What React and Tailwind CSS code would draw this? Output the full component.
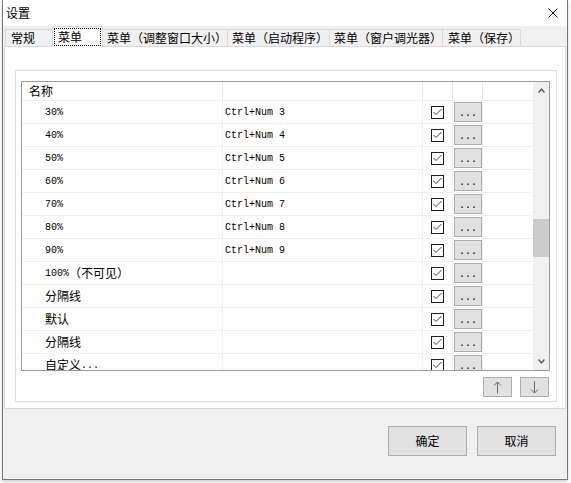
import React from 'react';

const rows = [
  { name: '30%', key: 'Ctrl+Num 3' },
  { name: '40%', key: 'Ctrl+Num 4' },
  { name: '50%', key: 'Ctrl+Num 5' },
  { name: '60%', key: 'Ctrl+Num 6' },
  { name: '70%', key: 'Ctrl+Num 7' },
  { name: '80%', key: 'Ctrl+Num 8' },
  { name: '90%', key: 'Ctrl+Num 9' },
  { name: '100%（不可见）', key: '' },
  { name: '分隔线', key: '' },
  { name: '默认', key: '' },
  { name: '分隔线', key: '' },
  { name: '自定义...', key: '' },
];

const tabs = [
  { label: '常规', w: 'w-[48px]', pl: 'pl-[5px]' },
  { label: '菜单', w: 'w-[51px]', active: true },
  { label: '菜单（调整窗口大小）', w: 'w-[126px]', pl: 'pl-[4px]' },
  { label: '菜单（启动程序）', w: 'w-[103px]', pl: 'pl-[4px]' },
  { label: '菜单（窗户调光器）', w: 'w-[114px]', pl: 'pl-[4px]' },
  { label: '菜单（保存）', w: 'w-[79px]', pl: 'pl-[5px]' },
];

// SimSun-like rendering: half-width ascii in mono, the rest in CJK
const Mixed = ({ text }) => {
  const parts = text.match(/[\x00-\x7f]+|[^\x00-\x7f]+/g) || [];
  return parts.map((p, i) =>
    /^[\x00-\x7f]/.test(p) ? (
      <span key={i} className="relative top-[1px] font-['Liberation_Mono',monospace] text-[10px] leading-[12px] whitespace-pre">
        {p}
      </span>
    ) : (
      <span key={i} className="text-[12px] leading-[14px]">
        {p}
      </span>
    )
  );
};

const CheckBox = () => (
  <div className="w-[13px] h-[13px] border border-[#1e1e1e] bg-white flex items-center justify-center">
    <svg width="11" height="11" viewBox="0 0 11 11">
      <polyline points="1.5,5 4,7.5 9.5,2" fill="none" stroke="#3c3c3c" strokeWidth="1" />
    </svg>
  </div>
);

const Row = ({ name, keyName }) => (
  <div className="flex h-[23px] shrink-0 border-b border-[#f0f0f0]">
    <div className="w-[201px] border-r border-[#f0f0f0] pl-[23px] flex items-center">
      <Mixed text={name} />
    </div>
    <div className="w-[200px] border-r border-[#f0f0f0] pl-[2px] flex items-center">
      <Mixed text={keyName} />
    </div>
    <div className="w-[30px] border-r border-[#f0f0f0] flex items-center justify-center">
      <CheckBox />
    </div>
    <div className="w-[30px] border-r border-[#f0f0f0] pl-px pt-px">
      <div className="w-[28px] h-[20px] border border-[#adadad] bg-[#e1e1e1] flex items-center justify-center">
        <span className="relative top-[2px] font-['Liberation_Mono',monospace] text-[10px] leading-[12px]">...</span>
      </div>
    </div>
    <div className="flex-1" />
  </div>
);

const SmallButton = ({ children }) => (
  <div className="w-[29px] h-[20px] border border-[#adadad] bg-[#e1e1e1] flex items-center justify-center">
    {children}
  </div>
);

export default function App() {
  return (
    <div className="w-[571px] h-[483px] bg-white font-['Noto_Sans_CJK_SC',sans-serif] text-black">
      <div className="ml-[2px] w-[566px] h-[480px] flex flex-col border-l border-r border-b border-[#767676] shadow-[0_2px_3px_rgba(0,0,0,0.18)]">
        {/* title bar */}
        <div className="h-[26px] bg-white flex items-center justify-between pl-[3px] pr-[9px]">
          <span className="text-[12px] leading-[14px]">设置</span>
          <svg width="10" height="10" viewBox="0 0 10 10">
            <path d="M0.5 0.5 L9.5 9.5 M9.5 0.5 L0.5 9.5" stroke="#1a1a1a" strokeWidth="1" />
          </svg>
        </div>

        <div className="flex-1 bg-[#f0f0f0] flex flex-col">
          {/* tabs */}
          <div className="h-[20px] flex items-end pl-[2px]">
            {tabs.map((t, i) =>
              t.active ? (
                <div
                  key={i}
                  className={`${t.w} h-[21px] -ml-px -mb-px relative z-10 bg-white border-t border-l border-r border-[#d9d9d9] pt-px px-px`}
                >
                  <div className="h-[18px] border border-dotted border-black flex items-center pl-[3px]">
                    <span className="text-[12px] leading-[14px]">{t.label}</span>
                  </div>
                </div>
              ) : (
                <div
                  key={i}
                  className={`${t.w} h-[17px] ${i > 0 ? '-ml-px' : ''} border-t border-l border-r border-[#d9d9d9] bg-[#f0f0f0] flex items-center ${t.pl}`}
                >
                  <span className="text-[12px] leading-[14px]">{t.label}</span>
                </div>
              )
            )}
          </div>

          {/* tab panel */}
          <div className="mx-px h-[363px] bg-white border border-[#d9d9d9] pl-[10px] pt-[23px] pr-[8px] pb-[6px]">
            <div className="h-[332px] border border-[#dcdcdc] pl-[5px] pt-[10px] pr-[6px]">
              {/* list view */}
              <div className="h-[290px] border border-[#9a9a9a] flex overflow-hidden">
                <div className="flex-1 flex flex-col overflow-hidden">
                  <div className="flex h-[19px] shrink-0 border-b border-[#f0f0f0]">
                    <div className="w-[201px] border-r border-[#e5e5e5] pl-[7px] flex items-center">
                      <span className="text-[12px] leading-[14px]">名称</span>
                    </div>
                    <div className="w-[200px] border-r border-[#e5e5e5]" />
                    <div className="w-[30px] border-r border-[#e5e5e5]" />
                    <div className="w-[30px] border-r border-[#e5e5e5]" />
                    <div className="flex-1" />
                  </div>
                  {rows.map((r, i) => (
                    <Row key={i} name={r.name} keyName={r.key} />
                  ))}
                </div>
                {/* scrollbar */}
                <div className="w-[16px] bg-[#f0f0f0] flex flex-col items-center">
                  <div className="h-[17px] w-full flex items-center justify-center">
                    <svg width="7" height="5" viewBox="0 0 7 5">
                      <path d="M0.5 4.5 L3.5 1.2 L6.5 4.5" fill="none" stroke="#606060" strokeWidth="1.5" />
                    </svg>
                  </div>
                  <div className="h-[120px]" />
                  <div className="w-full h-[38px] bg-[#cdcdcd]" />
                  <div className="flex-1" />
                  <div className="h-[17px] w-full flex items-center justify-center">
                    <svg width="7" height="5" viewBox="0 0 7 5">
                      <path d="M0.5 0.5 L3.5 3.8 L6.5 0.5" fill="none" stroke="#606060" strokeWidth="1.5" />
                    </svg>
                  </div>
                </div>
              </div>

              {/* move buttons */}
              <div className="mt-[6px] flex justify-end gap-[8px] pr-px">
                <SmallButton>
                  <svg width="9" height="13" viewBox="0 0 9 13">
                    <path d="M4.5 1 L4.5 12.5 M1 4.5 L4.5 1 L8 4.5" fill="none" stroke="#6a6a6a" strokeWidth="1" />
                  </svg>
                </SmallButton>
                <SmallButton>
                  <svg width="9" height="13" viewBox="0 0 9 13">
                    <path d="M4.5 0.5 L4.5 12 M1 8.5 L4.5 12 L8 8.5" fill="none" stroke="#6a6a6a" strokeWidth="1" />
                  </svg>
                </SmallButton>
              </div>
            </div>
          </div>

          {/* bottom buttons */}
          <div className="flex-1 flex justify-end items-start pt-[17px] pr-[11px] gap-[10px]">
            <div className="w-[79px] h-[30px] border border-[#adadad] bg-[#e1e1e1] flex items-center justify-center">
              <span className="text-[12px] leading-[14px]">确定</span>
            </div>
            <div className="w-[79px] h-[30px] border border-[#adadad] bg-[#e1e1e1] flex items-center justify-center">
              <span className="text-[12px] leading-[14px]">取消</span>
            </div>
          </div>
        </div>
      </div>
    </div>
  );
}
